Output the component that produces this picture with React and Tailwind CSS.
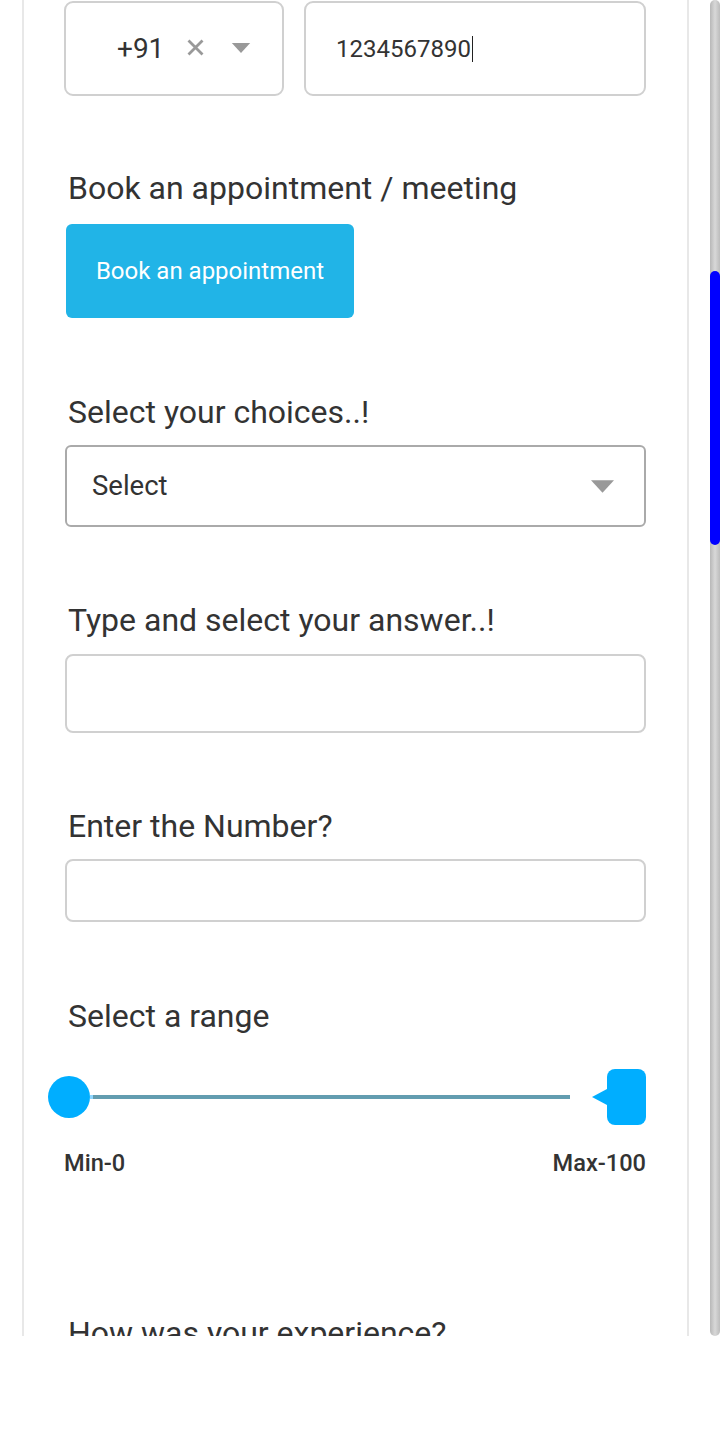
import React from 'react';

const font = { fontFamily: 'Roboto, "Noto Sans", sans-serif' };

function Label({ children, className = '' }) {
    return <div className={`text-[32px] leading-[32px] text-[#333] pl-[4px] whitespace-nowrap ${className}`}>{children}</div>;
}

function Caret({ className = '' }) {
    return (
        <svg width="22" height="12" viewBox="0 0 22 12" className={className}>
            <path d="M0 0 L22 0 L11 12 Z" fill="#999" />
        </svg>
    );
}

export default function App() {
    return (
        <div className="w-[720px] h-[1448px] bg-white" style={font}>
            <div className="flex h-[1336px]">
                <div className="ml-[22px] w-[667px] border-x-2 border-[#e8e8e8] pl-[40px] pr-[41px] overflow-hidden">
                    {/* phone row */}
                    <div className="flex gap-[20px] pt-px">
                        <div className="w-[220px] h-[95px] border-2 border-[#d0d0d0] rounded-[9px] flex items-center pl-[51px]">
                            <span className="text-[28px] text-[#333] leading-none">+91</span>
                            <svg width="17" height="17" viewBox="0 0 17 17" className="ml-[23px] -mt-[2px]">
                                <path d="M1.5 1.5 L15.5 15.5 M15.5 1.5 L1.5 15.5" stroke="#999" strokeWidth="2.8" />
                            </svg>
                            <Caret className="ml-[27px] w-[20px] h-[10px] -mt-[2px]" />
                        </div>
                        <div className="flex-1 h-[95px] border-2 border-[#d0d0d0] rounded-[9px] flex items-center pl-[30px]">
                            <span className="text-[24px] text-[#333] leading-none">1234567890</span>
                            <span className="w-px h-[26px] bg-[#222] ml-px"></span>
                        </div>
                    </div>

                    <Label className="mt-[76px]">Book an appointment / meeting</Label>
                    <button className="mt-[20px] ml-[2px] w-[288px] h-[94px] rounded-[6px] bg-[#21b4e7] text-white text-[24px] flex items-center justify-center">
                        Book an appointment
                    </button>

                    <Label className="mt-[78px]">Select your choices..!</Label>
                    <div className="mt-[17px] ml-px h-[82px] border-2 border-[#aaaaaa] rounded-[6px] flex items-center justify-between pl-[25px] pr-[30px]">
                        <span className="text-[27.5px] text-[#333]">Select</span>
                        <Caret className="w-[23px] h-[15px]" />
                    </div>

                    <Label className="mt-[77px]">Type and select your answer..!</Label>
                    <div className="mt-[18px] ml-px h-[79px] border-2 border-[#d0d0d0] rounded-[8px]"></div>

                    <Label className="mt-[77px]">Enter the Number?</Label>
                    <div className="mt-[17px] ml-px h-[63px] border-2 border-[#d0d0d0] rounded-[8px]"></div>

                    <Label className="mt-[78px]">Select a range</Label>

                    {/* range slider */}
                    <div className="mt-[37px] -ml-[16px] flex items-center h-[56px]">
                        <div className="w-[42px] h-[42px] rounded-full bg-[#00aeff] shrink-0"></div>
                        <div className="w-[3px] h-[4px] bg-[#8fd6ff]"></div>
                        <div className="w-[477px] h-[4px] bg-[#639db0]"></div>
                        <div className="ml-[22px] w-0 h-0 border-y-[8px] border-y-transparent border-r-[15px] border-r-[#00aeff]"></div>
                        <div className="w-[39px] h-[56px] rounded-[8px] bg-[#00aeff]"></div>
                    </div>
                    <div className="mt-[26px] flex justify-between text-[23.6px] font-medium text-[#333] leading-[24px]">
                        <span>Min-0</span>
                        <span>Max-100</span>
                    </div>

                    <Label className="mt-[142px]">How was your experience?</Label>
                </div>

                {/* scrollbar */}
                <div className="ml-[21px] w-[10px] h-[1336px] rounded-full bg-gradient-to-r from-[#b8b8b8] via-[#d8d8d8] to-[#bcbcbc] flex flex-col">
                    <div className="mt-[271px] h-[274px] w-[10px] rounded-full bg-[#0000ff]"></div>
                </div>
            </div>
        </div>
    );
}
